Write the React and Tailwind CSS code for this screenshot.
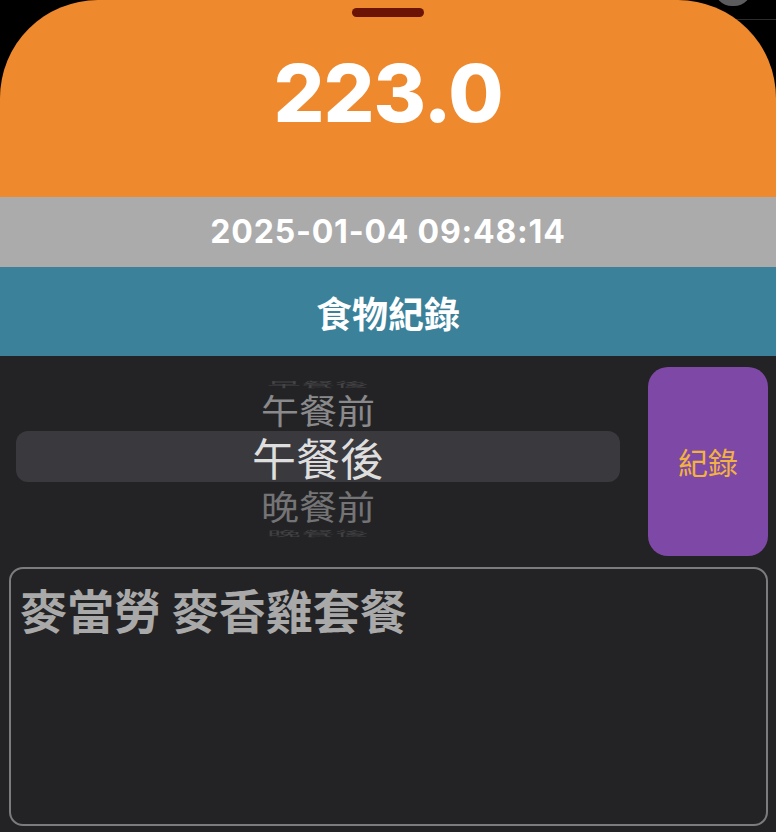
import React from 'react'

const cjk = { fontFamily: '"Noto Sans CJK TC", "Noto Sans", sans-serif' }
const num = { fontFamily: 'Inter, "Liberation Sans", sans-serif' }

/* ─── wheel picker ─────────────────────────────────────────────────────── */
function MealPicker() {
  return (
    <div className="flex-1 ml-[8px] h-[189px] flex flex-col" style={cjk}>
      <div className="h-[21px] flex items-end justify-center">
        <span className="text-[34px] leading-none text-[#444446] scale-y-[0.2] origin-bottom">早餐後</span>
      </div>
      <div className="h-[43px] flex items-center justify-center">
        <span className="text-[38px] leading-none text-[#8a8a8c] scale-y-[0.9]">午餐前</span>
      </div>
      <div className="h-[51px] rounded-[12px] bg-[#3a393e] flex items-center justify-center">
        <span className="text-[44px] leading-none text-[#dedede]">午餐後</span>
      </div>
      <div className="h-[48px] flex items-center justify-center">
        <span className="text-[38px] leading-none text-[#747476] scale-y-[0.9]">晚餐前</span>
      </div>
      <div className="h-[26px] flex items-start justify-center">
        <span className="text-[34px] leading-none text-[#404042] scale-y-[0.2] origin-top">晚餐後</span>
      </div>
    </div>
  )
}

export default function App() {
  return (
    <div className="w-[776px] h-[832px] bg-black relative overflow-hidden">
      {/* something peeking behind the sheet */}
      <div className="absolute right-[24px] -top-[30px] w-[38px] h-[36px] rounded-full bg-[#5c5c5e]" />
      <div className="absolute right-0 top-[19px] w-[60px] h-px bg-[#2c2c2e]" />

      <div className="relative flex flex-col h-full">
        {/* weight */}
        <div className="h-[197px] bg-[#ee892e] rounded-t-[98px] flex flex-col items-center">
          <div className="mt-[8px] w-[72px] h-[9px] rounded-full bg-[#6b1405]" />
          <div
            className="mt-[36px] text-[80px] font-extrabold leading-none text-white tracking-[-1px]"
            style={num}
          >
            223.0
          </div>
        </div>

        {/* timestamp */}
        <div className="h-[70px] bg-[#ababab] flex items-center justify-center">
          <span className="text-[32px] font-bold text-white tracking-[0.8px]" style={num}>
            2025-01-04 09:48:14
          </span>
        </div>

        {/* title */}
        <div className="h-[89px] bg-[#3a8199] flex items-center justify-center">
          <span className="text-[36px] font-bold text-white" style={cjk}>
            食物紀錄
          </span>
        </div>

        {/* body */}
        <div className="flex-1 bg-[#232325] px-[8px] pt-[11px] pb-[6px] flex flex-col gap-[11px]">
          <div className="flex items-start gap-[28px]">
            <MealPicker />
            <button className="w-[120px] h-[189px] rounded-[20px] bg-[#7e48a6] flex items-center justify-center">
              <span className="text-[30px] text-[#f2b23f]" style={cjk}>
                紀錄
              </span>
            </button>
          </div>

          <div className="flex-1 ml-px border-2 border-[#7c7c7e] rounded-[14px] px-[9px] pt-[16px]">
            <p className="text-[47px] font-bold leading-none text-[#a9a9a9]" style={cjk}>
              麥當勞 麥香雞套餐
            </p>
          </div>
        </div>
      </div>
    </div>
  )
}
